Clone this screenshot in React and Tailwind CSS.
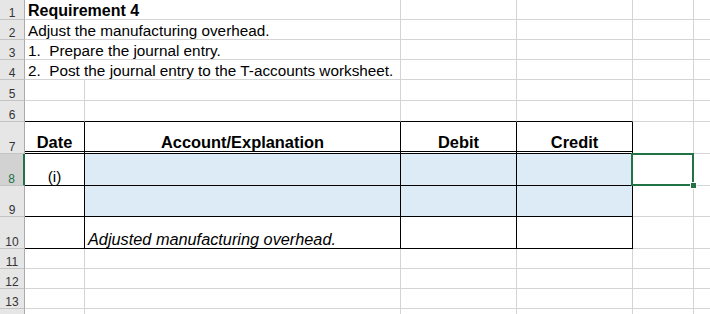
import React from 'react';

// Worksheet grid: row header 25px, columns A..E then the rest
const gray = 'border-r border-b border-[#d4d4d4]';

function Head({ n, active }) {
  return (
    <div
      className={`w-[25px] shrink-0 flex items-end justify-center border-b border-b-[#c4c4c4] text-[12px] leading-[12px] ${
        active
          ? 'bg-[#d2d2d2] text-[#217346] border-r-2 border-r-[#217346]'
          : 'bg-[#e6e6e6] text-[#333] border-r border-r-[#ababab]'
      }`}
    >
      <span>{n}</span>
    </div>
  );
}

function Row({ n, h, active, children }) {
  return (
    <div className={`flex ${h}`}>
      <Head n={n} active={active} />
      {children}
      <div className="flex-1 border-b border-[#d4d4d4]" />
    </div>
  );
}

function Blank({ w }) {
  return <div className={`${w} shrink-0 ${gray}`} />;
}

function TextRow({ n, bold, children }) {
  return (
    <Row n={n} h="h-[20px]">
      <div
        className={`w-[376px] shrink-0 ${gray} flex items-end pl-[3px] pb-[1px] leading-[15px] whitespace-pre ${
          bold ? 'font-bold text-[16px]' : ''
        }`}
      >
        {children}
      </div>
      <Blank w="w-[116px]" />
      <Blank w="w-[116px]" />
      <Blank w="w-[61px]" />
    </Row>
  );
}

function EmptyRow({ n, h = 'h-[20px]' }) {
  return (
    <Row n={n} h={h}>
      <Blank w="w-[60px]" />
      <Blank w="w-[316px]" />
      <Blank w="w-[116px]" />
      <Blank w="w-[116px]" />
      <Blank w="w-[61px]" />
    </Row>
  );
}

const box = 'shrink-0 border-r border-b border-black flex items-end pb-[1px] leading-[15px]';
const th = 'border-double border-b-[3px] justify-center font-bold text-[16.4px]';

export default function App() {
  return (
    <div className="h-[314px] w-[710px] overflow-hidden bg-white text-black text-[15.3px] font-['Liberation_Sans',Arial,sans-serif]">
      <TextRow n={1} bold>Requirement 4</TextRow>
      <TextRow n={2}>Adjust the manufacturing overhead.</TextRow>
      <TextRow n={3}>{'1.  Prepare the journal entry.'}</TextRow>
      <TextRow n={4}>{'2.  Post the journal entry to the T-accounts worksheet.'}</TextRow>
      <EmptyRow n={5} h="h-[21px]" />

      {/* row 6 carries the table's top edge */}
      <Row n={6} h="h-[21px]">
        <div className="w-[60px] shrink-0 border-r border-r-[#d4d4d4] border-b border-b-black" />
        <div className="w-[316px] shrink-0 border-r border-r-[#d4d4d4] border-b border-b-black" />
        <div className="w-[116px] shrink-0 border-r border-r-[#d4d4d4] border-b border-b-black" />
        <div className="w-[116px] shrink-0 border-r border-r-[#d4d4d4] border-b border-b-black" />
        <Blank w="w-[61px]" />
      </Row>

      <Row n={7} h="h-[32px]">
        <div className={`w-[60px] ${box} ${th}`}>Date</div>
        <div className={`w-[316px] ${box} ${th}`}>Account/Explanation</div>
        <div className={`w-[116px] ${box} ${th}`}>Debit</div>
        <div className={`w-[116px] ${box} ${th}`}>Credit</div>
        <Blank w="w-[61px]" />
      </Row>

      <Row n={8} h="h-[32px]" active>
        <div className={`w-[60px] ${box} justify-center`}>(i)</div>
        <div className={`w-[316px] ${box} bg-[#ddebf7]`} />
        <div className={`w-[116px] ${box} bg-[#ddebf7]`} />
        <div className={`w-[116px] ${box} bg-[#ddebf7]`} />
        <div className={`w-[61px] shrink-0 relative ${gray}`}>
          <div className="absolute -left-[2px] -top-[1px] w-[63px] h-[33px] border-2 border-[#217346]" />
          <div className="absolute left-[57px] top-[28px] w-[7px] h-[7px] bg-[#217346] border border-white" />
        </div>
      </Row>

      <Row n={9} h="h-[31px]">
        <div className={`w-[60px] ${box}`} />
        <div className={`w-[316px] ${box} bg-[#ddebf7]`} />
        <div className={`w-[116px] ${box} bg-[#ddebf7]`} />
        <div className={`w-[116px] ${box} bg-[#ddebf7]`} />
        <Blank w="w-[61px]" />
      </Row>

      <Row n={10} h="h-[32px]">
        <div className={`w-[60px] ${box}`} />
        <div className={`w-[316px] ${box} pl-[3px] italic text-[16.3px]`}>Adjusted manufacturing overhead.</div>
        <div className={`w-[116px] ${box}`} />
        <div className={`w-[116px] ${box}`} />
        <Blank w="w-[61px]" />
      </Row>

      <EmptyRow n={11} />
      <EmptyRow n={12} />
      <EmptyRow n={13} />
      <EmptyRow n="" />
    </div>
  );
}
